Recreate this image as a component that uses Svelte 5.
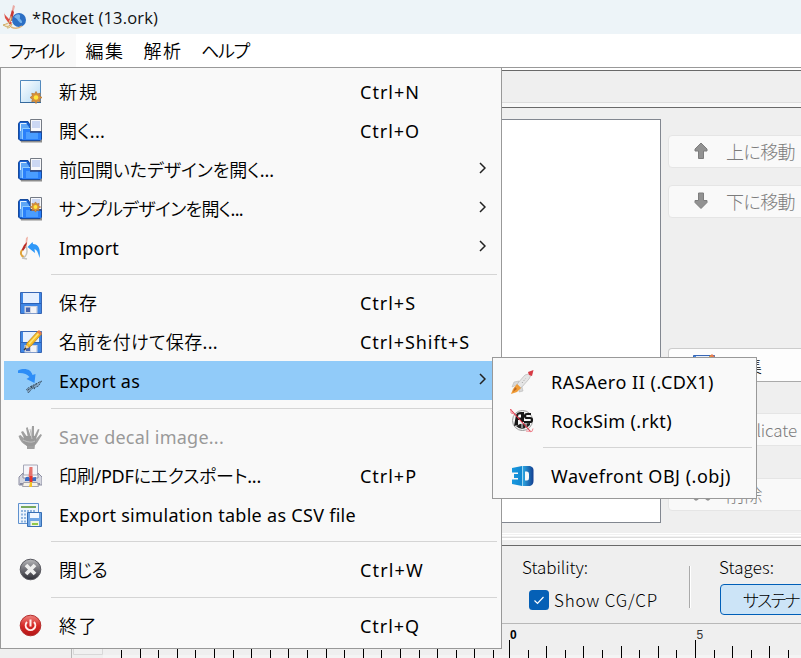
<script>
  const menuBar = [
    { t: 'ファイル', x: 9, w: 55, open: true },
    { t: '編集', x: 86, w: 39 },
    { t: '解析', x: 144, w: 39 },
    { t: 'ヘルプ', x: 202, w: 48 }
  ];

  const fileMenu = [
    [
      { icon: 'new', t: '新規', w: 40, key: 'Ctrl+N', kw: 60 },
      { icon: 'open', t: '開く...', w: 46, key: 'Ctrl+O', kw: 60 },
      { icon: 'open', t: '前回開いたデザインを開く...', w: 215, sub: true },
      { icon: 'example', t: 'サンプルデザインを開く...', w: 184, sub: true },
      { icon: 'import', t: 'Import', w: 60, sub: true }
    ],
    [
      { icon: 'save', t: '保存', w: 40, key: 'Ctrl+S', kw: 56 },
      { icon: 'saveas', t: '名前を付けて保存...', w: 159, key: 'Ctrl+Shift+S', kw: 110 },
      { icon: 'export', t: 'Export as', w: 81, sub: true, active: true }
    ],
    [
      { icon: 'decal', t: 'Save decal image...', w: 165, off: true },
      { icon: 'print', t: '印刷/PDFにエクスポート...', w: 202, key: 'Ctrl+P', kw: 57 },
      { icon: 'csv', t: 'Export simulation table as CSV file', w: 297 }
    ],
    [{ icon: 'close', t: '閉じる', w: 48, key: 'Ctrl+W', kw: 64 }],
    [{ icon: 'quit', t: '終了', w: 39, key: 'Ctrl+Q', kw: 60 }]
  ];

  const exportMenu = [
    [
      { icon: 'rasaero', t: 'RASAero II (.CDX1)', w: 163 },
      { icon: 'rocksim', t: 'RockSim (.rkt)', w: 121 }
    ],
    [{ icon: 'obj', t: 'Wavefront OBJ (.obj)', w: 180 }]
  ];

  // Ruler marks, numbered in half units from the origin.
  const ticks = Array.from({ length: 38 }, (_, i) => i - 21).map((i) => ({
    x: Math.round((i < 0 ? 511.600 : 509) + i * 18.6),
    y: i % 10 === 0 ? 16 : i % 2 === 0 ? 22 : 26
  }));

  // Spreads a label's letters over the given width.
  function fit(node, w) {
    const n = [...node.textContent].length;
    node.style.letterSpacing = (w - node.getBoundingClientRect().width) / n + 'px';
  }
</script>

{#snippet floppy()}
  <path d="M2.5 1.5h21v21h-21z" fill="#3f86e4" stroke="#3866b4" />
  <path d="M5 2h16v10H5z" fill="#e6f0ff" />
  <path d="M3 12.5h20" stroke="#2b62b8" />
  <path d="M6.5 15h13v7.5h-13z" fill="#cfd5e2" />
  <path d="M8 16.500h4v4.500H8z" fill="#4765b0" />
  <path d="M13 16h5v6h-5z" fill="#f2f3f7" />
{/snippet}

{#snippet folder()}
  <path d="M2 20h22v3.500H3z" fill="#8d8d8d" />
  <path d="M.5 4.500 2 2.500h8l2 3.500h11.500v14L22 21.500H2L.5 20z" fill="#1660d2" stroke="#174a9c" />
  <path d="M2 4h6l3 4v2H5v10H2z" fill="#5ea6f6" />
  <path d="M2.500 12V4.500h6" fill="none" stroke="#e4f2ff" />
  <path d="M4 10h19v11H4z" fill="#2a80fa" />
  <path d="M4.500 20V9.500H13" fill="none" stroke="#8fccff" />
  <path d="M8 13h12v7H8z" fill="#4a9dff" />
  <path d="M12.500.5h11v12h-11z" fill="#f7f8fb" stroke="#747a84" />
  <path d="M14 2h8v7h-8z" fill="#ccd8f3" />
  <path d="M12 13h12" stroke="#25458b" stroke-width="1.500" />
{/snippet}

{#snippet flower(x, y, s)}
  <g transform="translate({x} {y}) scale({s})">
    <path d="m0-6 1.500 2.400L4.200-4.200 3.600-1.500 6 0 3.600 1.500l.6 2.700-2.700-.6L0 6l-1.500-2.400-2.700.6.6-2.700L-6 0l2.400-1.500-.6-2.700 2.700.6z" fill="#d9923a" stroke="#b97833" stroke-width=".8" />
    <circle r="2.300" fill="#ffe93d" />
  </g>
{/snippet}

{#snippet glyph(name)}
  <svg class="ico" viewBox="0 0 24 24" width="24" height="24">
    {#if name === 'new'}
      <defs><linearGradient id="pg" x2="1" y2="1"><stop stop-color="#fff" /><stop offset="1" stop-color="#b4daf4" /></linearGradient></defs>
      <path d="M2.500.5h20v22h-20z" fill="url(#pg)" stroke="#5289bd" />
      <path d="M2 22.500h21" stroke="#35699d" />
      {@render flower(18, 17.500, 1)}
    {:else if name === 'open'}
      {@render folder()}
    {:else if name === 'example'}
      {@render folder()}
      {@render flower(17.500, 10, 0.85)}
    {:else if name === 'import'}
      <path d="M8 2 10 .5 9 8 7 12z" fill="#f0b4a8" />
      <path d="M9 6 8 11l-3 4-1.500-1L6 9z" fill="#ba2b25" />
      <path d="M4 14c-2 3-1 6 2 7" fill="none" stroke="#e0a43a" stroke-width="2" />
      <path d="M8 10c2 5 1 10-3 12M4 22l5 1" fill="none" stroke="#c4c4be" stroke-width="1.500" />
      <path d="m9.500 11 5-5 .5 2c5 0 8 4 6.500 14-1-4-2-8-5-9l.5 4z" fill="#2f98f8" />
    {:else if name === 'save'}
      {@render floppy()}
    {:else if name === 'saveas'}
      {@render floppy()}
      <path d="m7 19 2-6L20 1l3.500 3L13 16z" fill="#f6bc24" stroke="#b98324" stroke-width=".8" />
      <path d="m11 14 10-11" stroke="#ffe574" stroke-width="1.500" />
      <path d="m19 2 2-2 3 3-2 2z" fill="#e77b50" />
      <path d="m7 19 1.500-4 2.500 2.500z" fill="#f2d5a6" /><path d="m6 20 2-2" stroke="#333" stroke-width="1.500" />
    {:else if name === 'export'}
      <path d="M0 1.500c7-3 13-1 14.500 4.500l3-1-1 9-8-4 3-2C9 5 5 3.500 0 4z" fill="#2d8df7" />
      <path d="m23.500 12-3 5-7 3-3 4-2-4 5-3z" fill="#86a9c7" stroke="#405b72" stroke-width="1" stroke-dasharray="2 1" />
      <path d="m10 21 10-7M13 17l4 3" stroke="#33495b" stroke-width="1" stroke-dasharray="2 1" />
    {:else if name === 'decal'}
      <path d="M9 24v-3C5 19 2 16 .5 11l2-1 4 4L3 7l2-1 5 7L8 3l1.500-1L13 12l1-11h2v11l4-8 1.500.5L18 14l4.500-5L24 10l-5 8-2 2-.5 4z" fill="#a0a0a0" />
      <path d="M6 11h12v8l-3 2H9l-4-4z" fill="#999" />
      <path d="M5 15c4 2 9 3 12 1M12 4l2 10" stroke="#c2c2c2" fill="none" />
    {:else if name === 'print'}
      <path d="M5.500 1v10h14V1z" fill="#f5f5fa" stroke="#a6a8b7" />
      <path d="m5 9-4 4v8h23v-8l-4-4v5H5z" fill="#d6d7e0" stroke="#8c8ea2" />
      <path d="M2 20h20" stroke="#8789a0" stroke-width="2" />
      <path d="M11.500 3h3v10h-4z" fill="#e5736d" />
      <path d="M7 16c0-4 3-4 5-2l6-1v4H7z" fill="#3b6cc4" /><path d="M11.500 12h3v6h-3z" fill="#e8352b" />
      <path d="M5.500 18.500h14l1 4h-16z" fill="#f6f1e8" stroke="#a4a2ac" /><path d="M12 18h2v5h-3z" fill="#f4c326" />
    {:else if name === 'csv'}
      <path d="M.5.500h20v20H.5z" fill="#eef5fd" stroke="#5f91cf" />
      <path d="M3 3h15v2H3z" fill="#78a95d" />
      <path d="M3 8h15M3 11.500h15M3 15h15M3 18.500h7" stroke="#91b6df" stroke-width="2" stroke-dasharray="2 1" />
      <path d="M9.500 9.500h14v14h-14z" fill="#6ea5e4" stroke="#376eb3" />
      <path d="M12 10h9v5h-9z" fill="#f1f7ff" /><path d="M12.500 18h8.500v5h-8.500z" fill="#eef4e3" /><path d="M14 21h6" stroke="#90c84a" stroke-width="2" />
    {:else if name === 'close'}
      <defs><linearGradient id="cl" x2="0" y2="1"><stop stop-color="#b8b8bb" /><stop offset=".45" stop-color="#76767c" /><stop offset="1" stop-color="#2c2c34" /></linearGradient></defs>
      <circle cx="12.500" cy="11.500" r="10.300" fill="url(#cl)" stroke="#56565d" />
      <path d="m8 7 9 9m0-9-9 9" stroke="#eee" stroke-width="3.800" />
    {:else if name === 'quit'}
      <defs><linearGradient id="qt" x2="0" y2="1"><stop stop-color="#ee8580" /><stop offset=".5" stop-color="#d62a27" /><stop offset="1" stop-color="#b41516" /></linearGradient></defs>
      <circle cx="12.500" cy="11.500" r="10.300" fill="url(#qt)" stroke="#b32b2a" />
      <path d="M9 8a4.800 4.800 0 1 0 7 0M12.500 5.500v7" fill="none" stroke="#fff0ee" stroke-width="2" />
    {:else if name === 'rasaero'}
      <path d="M22 3 19 9l-8 9-4-4 8-9z" fill="#e5e5e5" stroke="#bcbcbc" stroke-width=".8" />
      <path d="m18 2 5.500-2L22 6l-3-1z" fill="#d83b45" />
      <path d="m9 11-5 1-2 5 5-2zM12 17l1 4-4 1 1-4z" fill="#d9d9d9" stroke="#b7b7b7" stroke-width=".6" />
      <path d="m7 14 4 4-4 4-6 2 2-5z" fill="#f09c37" /><path d="m5 17 2 2-4 3z" fill="#b96823" />
      <path d="m12 13 4-5" stroke="#9b9b9b" stroke-dasharray="1 2" />
    {:else if name === 'rocksim'}
      <circle cx="12.500" cy="11.500" r="10" fill="#f4f4f4" stroke="#999" />
      <path d="M4 17 6 6q1-3 5-3h3v10h-3v-2H8v5z" fill="#181818" />
      <path d="M8.500 5.500h2.500v3H8z" fill="#fff" />
      <path d="M21 5h-4q-2 0-2 2t2 2h3q2 0 2 2t-2 2h-6" fill="none" stroke="#181818" stroke-width="2.200" />
      <path d="M6 17q6 6 14-1v-2l-10 1z" fill="#222" />
      <path d="M12 14v5M16 14v5" stroke="#eee" stroke-width="1" />
      <path d="m0 0 21 23" stroke="#e32f43" stroke-width="1.100" /><path d="M1 0v4l3 1M16 22l6 .5 1-3" stroke="#ef8891" fill="none" />
    {:else if name === 'obj'}
      <defs><linearGradient id="td"><stop stop-color="#1999df" /><stop offset=".48" stop-color="#1286cf" /><stop offset=".52" stop-color="#2ba3df" /><stop offset="1" stop-color="#133f91" /></linearGradient></defs>
      <path fill-rule="evenodd" d="M2 4 12 2h8q3.500 1 3.500 4v11q0 4-3.500 5h-8L2 20v-4.500h6V14H4v-4h4V8.500H2zm13 3.500v9h2q2 0 2-2.500v-4q0-2.500-2-2.500z" fill="url(#td)" />
      <path d="M12.500 2v20" stroke="#bfeafa" stroke-width=".8" />
    {/if}
  </svg>
{/snippet}

{#snippet rows(groups)}
  {#each groups as g, gi}
    {#if gi > 0}<div class="sep" class:tall={gi % 2 === 0}></div>{/if}
    {#each g as r}
      <div class="row" class:active={r.active} class:off={r.off}>
        {@render glyph(r.icon)}
        <span class="name"><span use:fit={r.w}>{r.t}</span></span>
        {#if r.key}<span class="key"><span use:fit={r.kw}>{r.key}</span></span>{/if}
        {#if r.sub}<svg class="chev" viewBox="0 0 7 12" width="7" height="12"><path d="m1 1 5 5-5 5" fill="none" stroke="#222" stroke-width="1.500" /></svg>{/if}
      </div>
    {/each}
  {/each}
{/snippet}

<div class="win">
  <header>
    <svg viewBox="0 0 26 26" width="26" height="26">
      <path d="m11 1 2 1-2 8-3 4z" fill="#e9aaa4" />
      <path d="M2 8c0 2 2 4 4 6l4 5-2 2-5-7z" fill="#dc4e45" /><path d="m10 6 2 2-2 9-3-1z" fill="#c63a35" />
      <path d="M9 12c1 5-1 7-8 9l4 2 5-3c-1 3-3 4-5 4" fill="#f0e6cc" stroke="#d0ad65" />
      <circle cx="17" cy="16" r="7" fill="#2c6fc4" /><path d="M12 13c3-4 7-3 6 0s2 2 2 5-4-1-5-3z" fill="#76b4ed" />
      <path d="M9 23q6 3 11-1" fill="none" stroke="#dfb47c" stroke-width="1.500" />
    </svg>
    <span use:fit={126}>*Rocket (13.ork)</span>
  </header>
  <nav>
    {#each menuBar as m, i}
      <div class="mb" class:open={m.open} style:width="{i === 0 ? 76 : 58}px"><span use:fit={m.w}>{m.t}</span></div>
    {/each}
  </nav>
  <div class="tabs"></div>
  <main>
    <div class="tree"></div>
    <div class="buttons">
      <div class="btn">
        <svg viewBox="0 0 14 18" width="14" height="18"><path d="m7 1 6 6v2H9.500v7.500h-5V9H1V7z" fill="#929292" stroke="#7d7d7d" /></svg>
        <span use:fit={69}>上に移動</span>
      </div>
      <div class="btn second">
        <svg viewBox="0 0 14 18" width="14" height="18"><path d="m7 16.500-6-6v-2h3.500V1h5v7.500H13v2z" fill="#929292" stroke="#7d7d7d" /></svg>
        <span use:fit={69}>下に移動</span>
      </div>
      <div class="btn edit">
        {@render glyph('saveas')}
        <span use:fit={36}>編集</span>
      </div>
      <div class="btn dup"><span use:fit={72}>Duplicate</span></div>
      <div class="btn del">
        <svg viewBox="0 0 18 18" width="18" height="18"><path d="m3 3 12 10m0-10L3 13" stroke="#929292" stroke-width="5" stroke-linecap="round" /></svg>
        <span use:fit={37}>削除</span>
      </div>
    </div>
  </main>
  <div class="split"></div>
  <section>
    <div class="stab">
      <span use:fit={66}>Stability:</span>
      <div class="check">
        <svg viewBox="0 0 20 20" width="20" height="20"><rect width="20" height="20" rx="3.500" fill="#0560b6" /><path d="m5.500 10.500 3 3 6-6.500" fill="none" stroke="#fff" stroke-width="1.200" /></svg>
        <span use:fit={104}>Show CG/CP</span>
      </div>
    </div>
    <div class="bar"></div>
    <div class="stages">
      <span use:fit={55}>Stages:</span>
      <div class="stage"><span use:fit={56}>サステナ</span></div>
    </div>
  </section>
  <footer>
    <svg viewBox="0 0 801 34" width="801" height="34">
      <path d="M71.500 0v34" stroke="#b8b8b8" /><path d="M73.500 20v10.500h29V20" fill="#f0f0f0" stroke="#d8d8d8" />
      <path d="M103 31h698v3H103z" fill="#f4f4f4" />
      {#each ticks as t}<path d="M{t.x + 0.5} {t.y}v18" stroke="#000" />{/each}
      <text x="510" y="15" font-weight="bold">0</text>
      <text x="696.500" y="15" fill="#333">5</text>
    </svg>
  </footer>

  <div class="menu file">{@render rows(fileMenu)}</div>
  <div class="menu sub">{@render rows(exportMenu)}</div>
</div>

<style>
  :global(body) { overflow: hidden; }
  .win { position: relative; display: flex; flex-direction: column; width: 801px; height: 658px; overflow: hidden; background: #efefef; color: #000; font-family: 'Noto Sans', 'Noto Sans CJK JP DemiLight', 'Noto Sans CJK JP', sans-serif; font-size: 18px; font-feature-settings: 'palt'; white-space: nowrap; box-sizing: border-box; }
  .win * { box-sizing: border-box; }
  svg { display: block; flex: none; }
  header { display: flex; align-items: center; gap: 4px; height: 34px; padding: 0 0 0 2px; background: #edf4f8; font-family: 'Open Sans', sans-serif; font-size: 16.500px; color: #111; }
  nav { display: flex; height: 34px; background: #fff; border-bottom: 1px solid #999; }
  .mb { display: flex; align-items: center; justify-content: center; padding-bottom: 1px; font-family: 'Noto Sans CJK JP DemiLight', 'Noto Sans CJK JP', sans-serif; }
  .mb.open { background: #f9f9f9; padding-right: 4px; }
  .mb:last-child { margin-left: 4px; }
  .tabs { height: 38px; margin-top: 2px; border: solid #696969; border-width: 1px 0; box-shadow: 0 -2px #fff; background: linear-gradient(#efefef 31px, #ddd 31px 32px, #f8f8f8 32px); }
  main { display: flex; height: 425px; padding-top: 11px; }
  .tree { width: 661px; height: 404px; background: #fff; border: 1px solid #828790; }
  .buttons { padding: 16px 0 0 7px; width: 140px; }
  .btn { display: flex; align-items: center; gap: 18px; width: 180px; height: 33px; padding: 0 0 1px 25px; border: 1px solid #e5e5e5; border-radius: 4px; background: #f9f9f9; color: #7c7c7c; font-family: 'Noto Sans CJK JP', sans-serif; font-weight: 300; font-size: 18px; }
  .second { margin-top: 17px; }
  .edit { margin-top: 130px; height: 34px; padding-left: 22px; gap: 11px; color: #000; border-color: #ccc; border-bottom-color: #aaa; background: #fdfdfd; }
  .edit .ico { margin: 2px 0 0; }
  .dup { margin-top: 31px; padding-left: 56px; font-size: 17px; }
  .del { margin-top: 32px; padding-left: 24px; gap: 15px; }
  .split { height: 13px; background: linear-gradient(#fff 1px, #f1f1f1 1px 2px, #fff 2px 3px, #f2f2f2 3px 4px, #ddd 4px 5px, #fff 5px 7px, #efefef 7px 12px, #696969 12px); }
  section { display: flex; height: 77px; padding-left: 522px; font-family: 'Noto Sans CJK JP', sans-serif; font-weight: 300; font-size: 17px; line-height: 24px; }
  .stab { width: 167px; padding-top: 9px; }
  .check { display: flex; align-items: center; gap: 5px; margin: 9px 0 0 7px; height: 24px; }
  .bar { width: 2px; height: 42px; margin-top: 20px; background: #aaa; border-right: 1px solid #fff; }
  .stages { width: 110px; padding: 9px 0 0 28px; }
  .stage { width: 120px; height: 31px; margin: 5px 0 0 1px; padding: 3px 0 0 22px; border: 1px solid #005fb8; border-radius: 4px; background: #cce4f7; }
  footer { height: 35px; border-top: 1px solid #b8b8b8; background: #efefef; }
  text { font: 12px 'Liberation Sans', sans-serif; }
  text[font-weight] { font-weight: bold; }
  .menu { position: absolute; border: 1px solid #999; background: #f9f9f9; padding: 4px 3px; }
  .file { left: 0; top: 67px; width: 502px; height: 582px; }
  .sub { left: 492px; top: 357px; width: 265px; height: 142px; }
  .row { display: flex; align-items: center; height: 39px; padding-left: 14px; }
  .ico { margin-right: 17px; }
  .name { width: 301px; flex: none; line-height: 24px; }
  .key { line-height: 24px; }
  .chev { margin: -4px 0 0 119px; }
  .active { background: #91cbf9; }
  .off { color: #999; }
  .sep { height: 16px; margin: 0 1px 0 47px; background: linear-gradient(#d5d5d5, #d5d5d5) 0 7px / 100% 1px no-repeat; }
  .sep.tall { height: 17px; background-position: 0 8px; }
</style>
